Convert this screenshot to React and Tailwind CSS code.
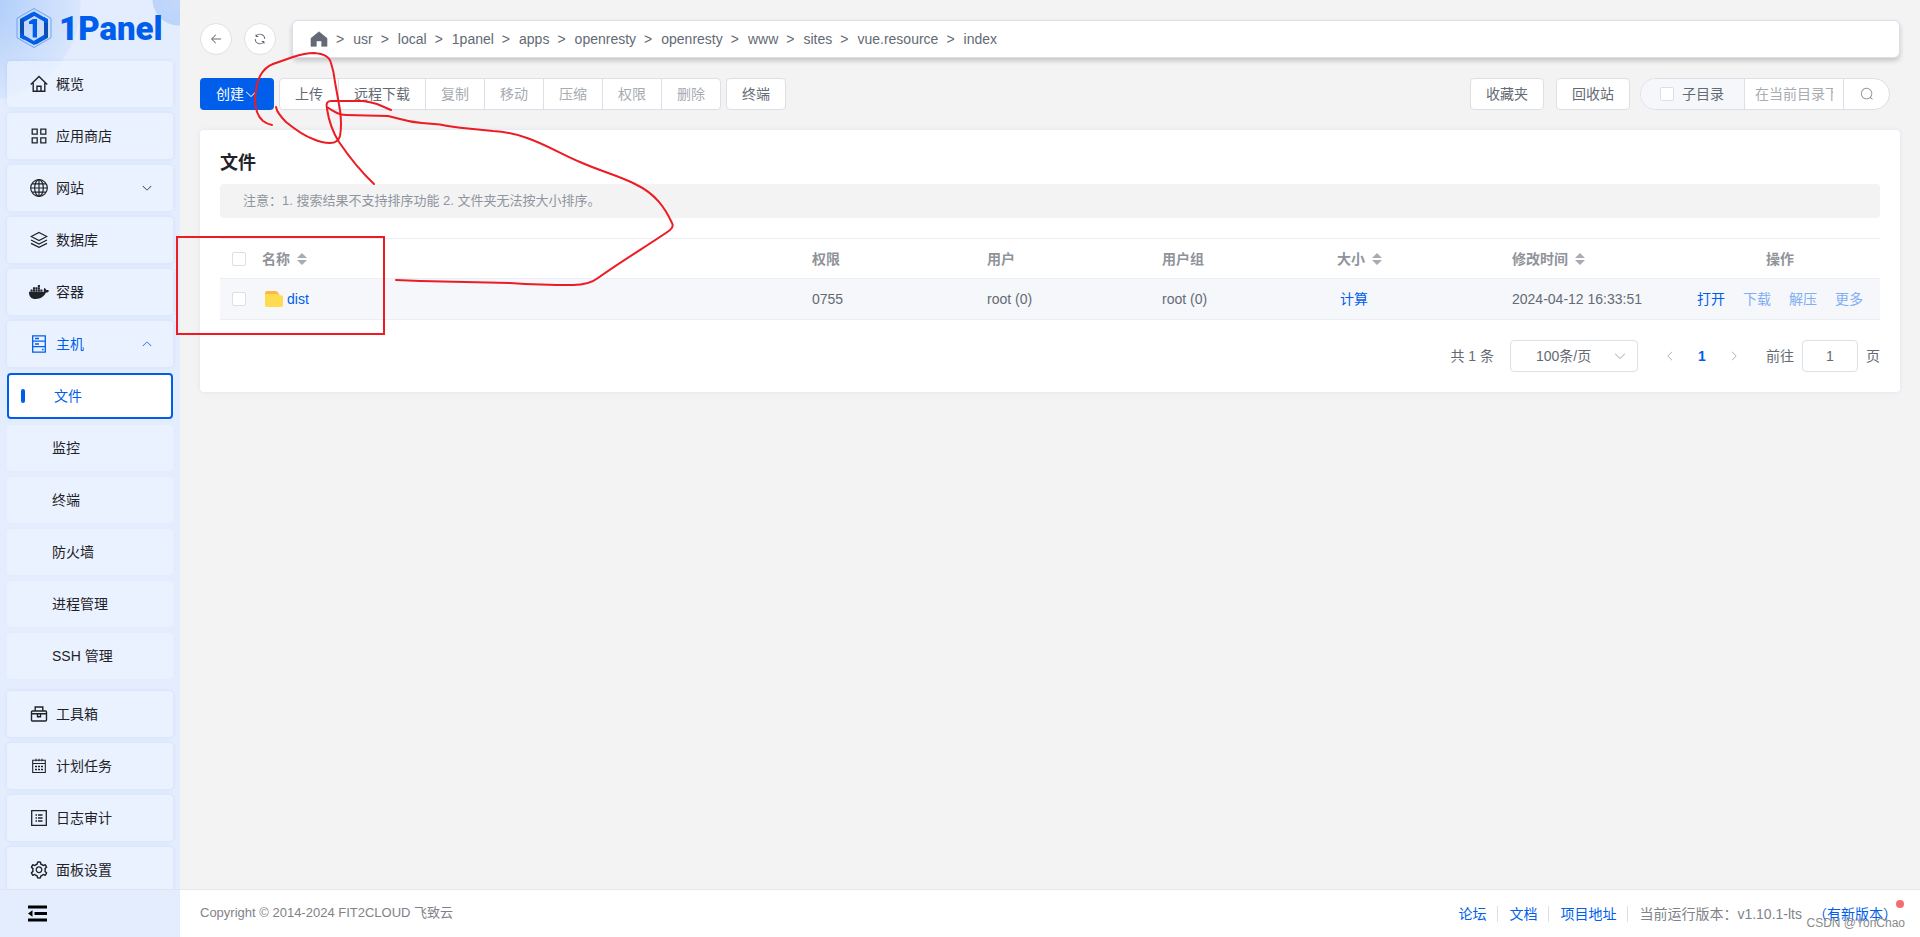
import { FaDocker } from "react-icons/fa";
import { AiOutlineSetting } from "react-icons/ai";

const ARROW_DOWN =
  "M831.872 340.864 512 652.672 192.128 340.864a30.592 30.592 0 0 0-42.752 0 29.12 29.12 0 0 0 0 41.6L489.664 714.24a32 32 0 0 0 44.672 0l340.288-331.712a29.12 29.12 0 0 0 0-41.728 30.592 30.592 0 0 0-42.752 0z";

function Chevron({ dir = 0, className = "size-3" }) {
  return (
    <svg viewBox="0 0 1024 1024" className={className} fill="currentColor" aria-hidden="true">
      <path d={ARROW_DOWN} transform={`rotate(${dir} 512 512)`} />
    </svg>
  );
}

function Line({ children, width = 1.3 }) {
  return (
    <svg viewBox="0 0 18 18" className="size-[18px]" fill="none" stroke="currentColor" strokeWidth={width} aria-hidden="true">
      {children}
    </svg>
  );
}

const icons = {
  home: (
    <Line width={1.4}>
      <path d="M0.8 9.6 9 1.4l8.200 8.200M3.200 8v8.300h11.600V8M7 16.300v-5h4v5" />
    </Line>
  ),
  apps: (
    <Line>
      <path d="M2.200 2.200h5v5h-5zM10.800 2.200h5v5h-5zM2.200 10.800h5v5h-5zM10.800 10.800h5v5h-5z" />
    </Line>
  ),
  globe: (
    <Line width={1.2}>
      <circle cx="9" cy="9" r="8.300" />
      <ellipse cx="9" cy="9" rx="4.300" ry="8.300" />
      <path d="M9 .7v16.600M.7 9h16.600M2 4.900h14M2 13.100h14" />
    </Line>
  ),
  layers: (
    <Line>
      <path d="M9 1.500 16.800 5.500 9 9.500 1.200 5.500zM1 9l8 4 8-4M1 12.300l8 4 8-4" />
    </Line>
  ),
  docker: <FaDocker className="size-5 shrink-0" />,
  host: (
    <Line>
      <path d="M2.700.8h12.600v16.400H2.700zM2.700 6.200h12.600M2.700 11.700h12.600M5 3.500h4M5 9h4M12 14.500h1.500" />
    </Line>
  ),
  toolbox: (
    <Line width={1.400}>
      <path d="M2.500 6h13a1 1 0 0 1 1 1V15a1 1 0 0 1-1 1h-13a1 1 0 0 1-1-1V7a1 1 0 0 1 1-1zM5.200 5.800V2h7.600v3.800M1.500 8.800h15M7.500 8.800v3h3v-3" />
    </Line>
  ),
  calendar: (
    <Line width={1.100}>
      <path d="M2.700 3.200h12.600v12.300H2.700zM2.700 6.500h12.600M6 1.800v2.500M9 1.800v2.500M12 1.800v2.500" />
      <path d="M5 9.500h2M8 9.500h2M11 9.500h2M5 12.500h2M8 12.500h2M11 12.500h2" strokeWidth="1.500" />
    </Line>
  ),
  log: (
    <Line>
      <path d="M1.700 1.700h14.600v14.600H1.700zM5.500 6h1.500M8 6h4.500M5.500 9h1.500M8 9h4.500M5.500 12h1.500M8 12h4.500" />
    </Line>
  ),
  gear: <AiOutlineSetting className="size-5 shrink-0" />,
};

function MenuItem({ icon, label, arrow, active }) {
  return (
    <a
      href="#"
      className={`flex h-[46px] shrink-0 items-center gap-2 rounded pl-[23px] pr-5 shadow-[0_0_4px_rgba(0,94,235,0.1)] ${
        icon === "home" ? "bg-[#edf3ff]/70" : "bg-[#ebf2ff]"
      } ${active ? "text-[#005eeb]" : "text-[#1f2329]"}`}
    >
      <span className="flex w-[18px] justify-center">{icons[icon]}</span>
      <span className="flex-1">{label}</span>
      {arrow && <Chevron dir={arrow === "up" ? 180 : 0} />}
    </a>
  );
}

function Logo() {
  return (
    <div className="flex h-[55px] shrink-0 items-center gap-1.5 pl-[15px] pt-px text-[#005eeb]">
      <svg viewBox="0 0 38 42" className="h-[42px] w-[38px]" fill="none" aria-hidden="true">
        <path d="M19 1.500 36 11.300v19.400L19 40.500 2 30.700V11.300z" stroke="#6da3f5" strokeWidth="1" />
        <path d="M17 5.500 5 12v18.500l4 2.300V14.800l11-6.400z" fill="#0b4fb3" />
        <path d="M21 37.500 33 30.800v-18.500l-4-2.300V28l-11 6.600z" fill="#0b4fb3" />
        <path d="M19 4.500 33 12.500v4.200L19 8.700 8.500 14.500v-3.900zM19 38 5 30.200V26l14 8 10.500-6v4z" fill="#005eeb" />
        <path d="M14 14.500 18 12h4v18.500h-4.300V17H14z" fill="#005eeb" />
      </svg>
      <span className="font-[Roboto] text-[33px] font-black leading-none">1Panel</span>
    </div>
  );
}

function Sidebar() {
  return (
    <aside className="flex w-[180px] shrink-0 flex-col bg-[#e4edfd] bg-[radial-gradient(circle_at_-16px_4px,#accbf9_0,#c6dbfb_55px,#d9e6fd_96px,transparent_97px),radial-gradient(circle_at_179px_-1px,#c3d8fb_0,#bcd4fb_26px,transparent_27px)]">
      <Logo />
      <nav className="flex min-h-0 flex-1 flex-col gap-1.5 overflow-hidden px-[7px] pt-1.5">
        <MenuItem icon="home" label="概览" />
        <MenuItem icon="apps" label="应用商店" />
        <MenuItem icon="globe" label="网站" arrow="down" />
        <MenuItem icon="layers" label="数据库" />
        <MenuItem icon="docker" label="容器" />
        <MenuItem icon="host" label="主机" arrow="up" active />
        <div className="flex shrink-0 flex-col gap-1.5 pb-1.5 text-[#1f2329]">
          <a href="#" className="flex h-[46px] items-center gap-[29px] rounded border-2 border-[#005eeb] bg-white pl-3 text-[#005eeb]">
            <span className="h-3.5 w-1 rounded-sm bg-[#005eeb]" />
            文件
          </a>
          {["监控", "终端", "防火墙", "进程管理", "SSH 管理"].map((t) => (
            <a key={t} href="#" className="flex h-[46px] items-center rounded bg-[#ebf2ff] pl-[45px]">
              {t}
            </a>
          ))}
        </div>
        <MenuItem icon="toolbox" label="工具箱" />
        <MenuItem icon="calendar" label="计划任务" />
        <MenuItem icon="log" label="日志审计" />
        <MenuItem icon="gear" label="面板设置" />
      </nav>
      <div className="flex h-12 shrink-0 items-center border-t border-[#e1e4ea] pl-7">
        <button type="button" aria-label="收起菜单" className="text-black">
          <svg viewBox="0 0 19 17" className="h-[17px] w-[19px]" fill="currentColor" aria-hidden="true">
            <path d="M0 0.500h19v3H0zM6.500 7h12.500v3H6.500zM0 13.500h19v3H0zM0 8.500 4.500 5.300v6.400z" />
          </svg>
        </button>
      </div>
    </aside>
  );
}

const crumbs = ["usr", "local", "1panel", "apps", "openresty", "openresty", "www", "sites", "vue.resource", "index"];

function PathBar() {
  const round = "flex size-8 items-center justify-center rounded-full border border-[#dee0e9] bg-white text-[#646a73]";
  return (
    <div className="flex items-center">
      <button type="button" aria-label="返回" className={round}>
        <svg viewBox="0 0 1024 1024" className="size-3.5" fill="currentColor" aria-hidden="true">
          <path d="M224 480h640a32 32 0 1 1 0 64H224a32 32 0 0 1 0-64" />
          <path d="m237.248 512 265.408 265.344a32 32 0 0 1-45.312 45.312l-288-288a32 32 0 0 1 0-45.312l288-288a32 32 0 1 1 45.312 45.312z" />
        </svg>
      </button>
      <button type="button" aria-label="刷新" className={`ml-3 ${round}`}>
        <svg viewBox="0 0 1024 1024" className="size-3.5" fill="currentColor" aria-hidden="true">
          <path d="M771.776 794.88A384 384 0 0 1 128 512h64a320 320 0 0 0 555.712 216.448H654.72a32 32 0 1 1 0-64h149.056a32 32 0 0 1 32 32v148.928a32 32 0 1 1-64 0v-50.560zM276.288 295.616h92.992a32 32 0 0 1 0 64H220.160a32 32 0 0 1-32-32V178.560a32 32 0 0 1 64 0v50.560A384 384 0 0 1 896.128 512h-64a320 320 0 0 0-555.776-216.384z" />
        </svg>
      </button>
      <nav className="ml-4 flex h-[38px] flex-1 items-center rounded-md border border-[#dcdfe9] bg-white pl-[17px] shadow-[0_3px_5px_rgba(0,0,0,0.18)]">
        <a href="#" aria-label="根目录">
          <svg viewBox="0 0 18 18" className="size-[18px] text-[#646a73]" fill="currentColor" aria-hidden="true">
            <path d="M9 1.800 17 8.300V16.300h-5.300v-5.400H6.300v5.400H1V8.300z" stroke="currentColor" strokeWidth="0.600" strokeLinejoin="round" />
          </svg>
        </a>
        {crumbs.map((c, i) => (
          <span key={i} className="flex">
            <span className="ml-2 mr-[9px]">&gt;</span>
            <a href="#">{c}</a>
          </span>
        ))}
      </nav>
    </div>
  );
}

const box = "h-8 border border-[#dcdfe6] bg-white px-[15px]";

function Toolbar() {
  return (
    <div className="flex items-center">
      <button type="button" className="flex h-8 w-[74px] items-center rounded bg-[#005eeb] pl-4 text-white">
        创建
        <Chevron className="size-3.5" />
      </button>
      <div className="ml-[5px] flex">
        <button type="button" className={`${box} rounded-l`}>上传</button>
        <button type="button" className={`${box} -ml-px`}>远程下载</button>
        {["复制", "移动", "压缩", "权限", "删除"].map((t) => (
          <button key={t} type="button" disabled className={`${box} -ml-px text-[#a8abb2] last:rounded-r`}>
            {t}
          </button>
        ))}
      </div>
      <button type="button" className={`${box} ml-[5px] rounded`}>终端</button>
      <div className="ml-auto flex items-center pr-2.5">
        <button type="button" className={`${box} rounded`}>收藏夹</button>
        <button type="button" className={`${box} ml-3 rounded`}>回收站</button>
        <div className="ml-2.5 flex h-8 w-[250px] overflow-hidden rounded-full border border-[#dcdfe6] bg-white">
          <label className="flex shrink-0 items-center gap-2 border-r border-[#dcdfe6] bg-[#f5f7fa] pl-[19px] pr-5">
            <input type="checkbox" className="size-3.5 appearance-none rounded-xs border border-[#dcdfe6] bg-white" />
            子目录
          </label>
          <input
            type="text"
            aria-label="搜索"
            placeholder="在当前目录下查找"
            className="w-[98px] shrink-0 px-2.5 outline-none placeholder:text-[#a8abb2]"
          />
          <button type="button" aria-label="搜索" className="flex flex-1 items-center justify-center border-l border-[#dcdfe6] text-[#909399]">
            <svg viewBox="0 0 1024 1024" className="size-3.5" fill="currentColor" aria-hidden="true">
              <path d="m795.904 750.720 124.992 124.928a32 32 0 0 1-45.248 45.248L750.656 795.904a416 416 0 1 1 45.248-45.248zM480 832a352 352 0 1 0 0-704 352 352 0 0 0 0 704z" />
            </svg>
          </button>
        </div>
      </div>
    </div>
  );
}

function Sort() {
  return (
    <svg viewBox="0 0 10 12" className="h-3 w-2.5 text-[#a8abb2]" fill="currentColor" aria-hidden="true">
      <path d="M0 5h10L5 0zM0 7h10l-5 5z" />
    </svg>
  );
}

const columns = [["名称", true], ["权限"], ["用户"], ["用户组"], ["大小", true], ["修改时间", true]];
const check = "block size-3.5 appearance-none rounded-xs border border-[#dcdfe6] bg-white";

function FileTable() {
  const cell = "border-b border-[#ebeef5] px-3";
  return (
    <table className="mt-5 w-full table-fixed border-separate border-spacing-0 border-t border-[#ebeef5] text-left">
      <colgroup>
        <col className="w-[30px]" />
        <col />
        <col className="w-[175px]" />
        <col className="w-[175px]" />
        <col className="w-[175px]" />
        <col className="w-[175px]" />
        <col className="w-[180px]" />
        <col className="w-[200px]" />
      </colgroup>
      <thead className="text-[#909399]">
        <tr>
          <th className="h-10 border-b border-[#ebeef5] pl-3">
            <input type="checkbox" aria-label="全选" className={check} />
          </th>
          {columns.map(([t, s]) => (
            <th key={t} className={`h-10 font-bold ${cell}`}>
              <span className="flex items-center gap-[7px]">
                {t}
                {s && <Sort />}
              </span>
            </th>
          ))}
          <th className={`h-10 text-center font-bold ${cell}`}>操作</th>
        </tr>
      </thead>
      <tbody className="bg-[#f5f7fb]">
        <tr>
          <td className="h-[41px] border-b border-[#ebeef5] pl-3">
            <input type="checkbox" aria-label="选择 dist" className={check} />
          </td>
          <td className={cell}>
            <a href="#" className="flex items-center gap-1 pl-[3px] text-[#005eeb]">
              <svg viewBox="0 0 18 16" className="h-4 w-[18px]" aria-hidden="true">
                <path d="M2 0h8.500q1.500 0 2.500 1.500L14.500 4H0V2a2 2 0 0 1 2-2z" fill="#fdb745" />
                <path d="M0 3h12.500l1.500 1q1 .3 2 .3a2 2 0 0 1 2 2V14a2 2 0 0 1-2 2H2a2 2 0 0 1-2-2z" fill="#ffdb4f" />
              </svg>
              dist
            </a>
          </td>
          <td className={cell}>0755</td>
          <td className={cell}>root (0)</td>
          <td className={cell}>root (0)</td>
          <td className={cell}>
            <button type="button" className="pl-[3px] text-[#005eeb]">计算</button>
          </td>
          <td className={cell}>2024-04-12 16:33:51</td>
          <td className={cell}>
            <span className="flex justify-center gap-[18px] text-[#80aef5]">
              <button type="button" className="text-[#005eeb]">打开</button>
              <button type="button" disabled>下载</button>
              <button type="button" disabled>解压</button>
              <button type="button" disabled>更多</button>
            </span>
          </td>
        </tr>
      </tbody>
    </table>
  );
}

function Pagination() {
  const page = "flex size-8 items-center justify-center";
  return (
    <div className="mt-5 flex items-center justify-end">
      <span className="mr-4">共 1 条</span>
      <span className="relative">
        <select aria-label="每页条数" className="h-8 w-32 appearance-none rounded border border-[#dcdfe6] bg-white pl-[25px]">
          <option>100条/页</option>
        </select>
        <span className="pointer-events-none absolute inset-y-0 right-[11px] flex items-center text-[#a8abb2]">
          <Chevron className="size-3.5" />
        </span>
      </span>
      <button type="button" aria-label="上一页" disabled className={`ml-4 text-[#a8abb2] ${page}`}>
        <Chevron dir={90} />
      </button>
      <button type="button" className={`font-bold text-[#005eeb] ${page}`}>1</button>
      <button type="button" aria-label="下一页" disabled className={`text-[#a8abb2] ${page}`}>
        <Chevron dir={-90} />
      </button>
      <label className="ml-4 flex items-center gap-2">
        前往
        <input type="text" defaultValue="1" className="h-8 w-14 rounded border border-[#dcdfe6] text-center outline-none" />
        页
      </label>
    </div>
  );
}

function Footer() {
  const divider = "h-4 w-px bg-[#dcdfe6]";
  return (
    <footer className="flex h-12 shrink-0 items-center justify-between border-t border-[#e4e7ed] bg-white pl-5 pr-[23px]">
      <span className="text-[13px] text-[#7f8389]">Copyright © 2014-2024 FIT2CLOUD 飞致云</span>
      <div className="flex items-center gap-[11px] text-[#005eeb]">
        <a href="#">论坛</a>
        <span className={divider} />
        <a href="#">文档</a>
        <span className={divider} />
        <a href="#">项目地址</a>
        <span className={divider} />
        <span className="text-[#7f8389]">当前运行版本：v1.10.1-lts</span>
        <a href="#" className="relative">
          （有新版本）
          <span className="absolute -right-[7px] -top-1 size-2 rounded-full bg-[#f56c6c]" />
        </a>
      </div>
    </footer>
  );
}

function Annotations() {
  return (
    <svg
      width="1920"
      height="937"
      className="pointer-events-none absolute left-0 top-0"
      fill="none"
      stroke="#ed1c24"
      strokeWidth="2"
      strokeLinecap="round"
      strokeLinejoin="round"
      aria-hidden="true"
    >
      <rect x="177" y="237" width="207" height="97" strokeLinejoin="miter" />
      <path d="M272 125Q267 124 263 121Q255 114 255 99Q256 84 260 76Q265 67 273 64L293 57Q305 53 314 53Q329 54 331 63Q334 72 335 82L340 110Q342 125 340 136Q338 143 330 143Q322 143 313 139Q302 135 286 122Q277 113 276 107" />
      <path d="M374 184Q356 167 339 142Q330 128 327 109Q325 101 331 101L363 101Q370 102 377 104L391 110" />
      <path d="M327 107Q331 110 337 113Q341 115 346 115L388 116L400 119Q410 122 422 123L440 124.500Q452 127 468 128.500L493 131Q510 132 527 138C545 144 565 156 580 162C600 171 620 176 635 184C656 194 665 208 672 223Q674 227 670 230C655 241 620 262 598 278Q589 285 573 285Q540 285 510 283L420 281L396 280" />
    </svg>
  );
}

export default function App() {
  return (
    <div className="relative flex h-screen overflow-hidden bg-[#f3f3f3] font-['Liberation_Sans','Noto_Sans_CJK_SC',sans-serif] text-sm text-[#646a73]">
      <Sidebar />
      <div className="flex min-w-0 flex-1 flex-col">
        <main className="flex min-h-0 flex-1 flex-col gap-5 p-5">
          <PathBar />
          <Toolbar />
          <section className="rounded bg-white p-5 shadow-[0_0_4px_rgba(0,94,235,0.1)]">
            <h1 className="mb-2 text-lg font-bold leading-[26px] text-[#1f2329]">文件</h1>
            <p className="flex h-[34px] items-center rounded bg-[#f3f3f3] px-[23px] text-[13px] text-[#8f959e]">
              注意：1. 搜索结果不支持排序功能 2. 文件夹无法按大小排序。
            </p>
            <FileTable />
            <Pagination />
          </section>
        </main>
        <Footer />
      </div>
      <Annotations />
      <span className="pointer-events-none absolute bottom-1.5 right-[15px] text-xs text-[#8a8a8a]">CSDN @YonChao</span>
    </div>
  );
}
